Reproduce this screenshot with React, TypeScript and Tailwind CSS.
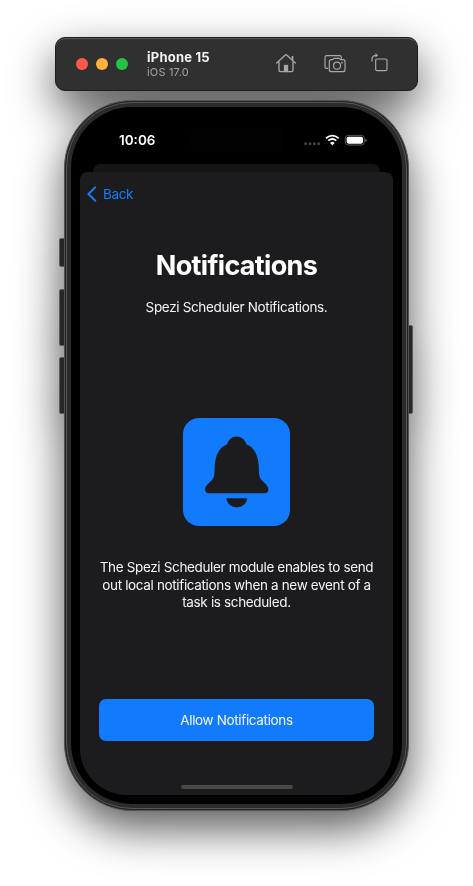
import React from "react";

function HomeIcon() {
  return (
    <svg className="h-5 w-5" viewBox="0 0 60 60" fill="none" stroke="#a8a8a8" strokeWidth="4" strokeLinecap="round" strokeLinejoin="round">
      <path d="M2 30 L27 6.500 Q30 4 33 6.500 L58 30" />
      <path d="M9 27 V52 Q9 56 13 56 H47 Q51 56 51 52 V27" />
      <path d="M49.500 21 V9" strokeLinecap="butt" strokeWidth="5" />
      <path d="M24 55 V36 H36 V55 Z" fill="#a8a8a8" strokeWidth="1" />
    </svg>
  );
}

function ScreenshotIcon() {
  return (
    <svg className="h-5 w-[22px]" viewBox="0 0 66 60" fill="none" stroke="#a8a8a8" strokeWidth="3.500" strokeLinecap="round" strokeLinejoin="round">
      <path d="M11 46 H8 Q3 46 3 41 V13 Q3 8 8 8 H47 Q52 8 52 13 V16" />
      <path d="M22 20 H26 L30 16 H46 L50 20 H57 Q63 20 63 26 V50 Q63 56 57 56 H22 Q16 56 16 50 V26 Q16 20 22 20 Z" />
      <circle cx="39" cy="38" r="10.500" />
      <circle cx="54" cy="29" r="1" />
    </svg>
  );
}

function RotateIcon() {
  return (
    <svg className="h-5 w-[18px]" viewBox="0 0 54 60" fill="none" stroke="#a8a8a8" strokeWidth="3.500" strokeLinecap="round" strokeLinejoin="round">
      <rect x="14" y="18" width="34" height="35" rx="4" />
      <path d="M3 24 V19 Q3 7 16 7" />
      <path d="M14 1.500 L21 7 L14 12.500 Z" fill="#a8a8a8" strokeWidth="1" />
    </svg>
  );
}

function BellIcon() {
  return (
    <svg className="h-full w-full" viewBox="39 40 321 321" fill="#1c1c1e">
      <path d="M199 95 C213 95 224 104 229 119 C252 128 263 151 265 181 C266 200 265 213 271 222 C279 233 294 240 294 254 C294 262 288 265 280 265 H119 C111 265 105 262 105 254 C105 240 120 233 128 222 C134 213 133 200 134 181 C136 151 147 128 170 119 C175 104 185 95 199 95 Z" />
      <path d="M168.500 280 H231 C229 296 216 307 199.500 307 C183 307 170.500 296 168.500 280 Z" />
    </svg>
  );
}

function StatusIcons() {
  return (
    <svg className="h-[14px] w-[66px]" viewBox="0 0 198 42" fill="none">
      <g fill="#424242">
        <rect x="4" y="28" width="8" height="8" rx="2.500" />
        <rect x="17" y="28" width="8" height="8" rx="2.500" />
        <rect x="30" y="28" width="8" height="8" rx="2.500" />
        <rect x="43" y="28" width="8" height="8" rx="2.500" />
      </g>
      <g stroke="#fff" strokeWidth="5.500">
        <path d="M69 15.500 Q88 0.500 107 15.500" />
        <path d="M76 23 Q88 13 100 23" />
      </g>
      <path d="M81 30 Q88 23 95 30 L88 37 Z" fill="#fff" />
      <rect x="127" y="7" width="57" height="29" rx="9" stroke="#6c6c6c" strokeWidth="2.500" />
      <rect x="131" y="11" width="49" height="21" rx="5.500" fill="#fff" />
      <path d="M187 17 Q191 18 191 21.500 Q191 25 187 26 Z" fill="#6c6c6c" />
    </svg>
  );
}

function Toolbar() {
  return (
    <header className="flex h-[54px] w-[363px] items-center rounded-[10px] border border-[#1d1d1d] bg-[#303030] shadow-[inset_0_1px_0_#585858]">
      <div className="ml-5 flex gap-2">
        <span className="h-3 w-3 rounded-full bg-[#ff5650]" />
        <span className="h-3 w-3 rounded-full bg-[#fdb33b]" />
        <span className="h-3 w-3 rounded-full bg-[#27c145]" />
      </div>
      <div className="ml-[19px] flex w-[129px] flex-col">
        <span className="text-[13px] leading-[15px] font-bold tracking-[0.22px] text-[#f2f2f2]">iPhone 15</span>
        <span className="text-[11px] leading-[14px] tracking-[0.18px] text-[#a3a3a3]">iOS 17.0</span>
      </div>
      <div className="flex items-center">
        <span className="-mt-[2px] flex"><HomeIcon /></span>
        <span className="-mt-[2px] ml-[28px] flex"><ScreenshotIcon /></span>
        <span className="-mt-[2px] ml-[25px] flex"><RotateIcon /></span>
      </div>
    </header>
  );
}

function SideButtons() {
  return (
    <>
      <span className="absolute top-[138px] -left-[5px] h-[29px] w-[7px] rounded-[2px] border border-[#5c5c5c] bg-[#262727]" />
      <span className="absolute top-[189px] -left-[5px] h-[57px] w-[7px] rounded-[2px] border border-[#5c5c5c] bg-[#262727]" />
      <span className="absolute top-[257px] -left-[5px] h-[57px] w-[7px] rounded-[2px] border border-[#5c5c5c] bg-[#262727]" />
      <span className="absolute top-[225px] -right-[4px] h-[89px] w-[6px] rounded-[2px] border border-[#5c5c5c] bg-[#262727]" />
    </>
  );
}

function Sheet() {
  return (
    <main className="flex h-[623px] flex-col items-center rounded-t-[8px] rounded-b-[47px] bg-[#1c1c1e]">
      <div className="flex h-11 w-full items-center pl-[7px] text-[#157cfb]">
        <svg className="h-4 w-[10px]" viewBox="0 0 10 16" fill="none" stroke="currentColor" strokeWidth="1.900" strokeLinecap="round" strokeLinejoin="round">
          <path d="M8.300 1.300 L1.400 8 L8.300 14.700" />
        </svg>
        <span className="ml-[6px] text-[13.5px] tracking-[-0.35px]">Back</span>
      </div>
      <h1 className="mt-[33px] text-[27px] leading-[34px] font-bold tracking-[-0.68px]">Notifications</h1>
      <p className="mt-[15px] text-[13.5px] leading-[18px] tracking-[-0.34px] text-[#f4f4f4]">Spezi Scheduler Notifications.</p>
      <div className="mt-[102px] h-[107.500px] w-[107.500px] shrink-0 overflow-hidden rounded-[16px] bg-[#117afd]">
        <BellIcon />
      </div>
      <p className="mt-[33.500px] text-center text-[13.5px] leading-[17.500px] tracking-[-0.35px] text-[#f4f4f4]">
        The Spezi Scheduler module enables to send
        <br />
        out local notifications when a new event of a
        <br />
        task is scheduled.
      </p>
      <button className="mt-[87.500px] h-[41.500px] w-[275px] shrink-0 rounded-[7px] bg-[#117afd] text-[13.5px] tracking-[-0.35px] text-[#f4f8ff]">
        Allow Notifications
      </button>
      <div className="mt-auto mb-[6px] h-[4px] w-[112px] rounded-full bg-[#49494a]" />
    </main>
  );
}

function Phone() {
  return (
    <section className="relative mt-[9px] h-[711px] w-[345px]">
      <SideButtons />
      <div className="relative h-full rounded-[68px] border border-[#555555] bg-[#222222] p-px">
        <div className="h-full rounded-[66px] border border-[#565656] bg-[#2b2b2b] p-1">
          <div className="h-full rounded-[61px] bg-black px-[9px] pt-[9px]">
            <div className="flex h-12 items-center pl-[39px]">
              <span className="w-[69px] text-[13.5px] font-semibold">10:06</span>
              <span className="h-[26px] w-[97px] rounded-full bg-[#020202]" />
              <span className="ml-[18px] flex"><StatusIcons /></span>
            </div>
            <div className="mx-[13px] h-2 rounded-t-[7px] bg-[#151516]" />
            <Sheet />
          </div>
        </div>
      </div>
    </section>
  );
}

export default function App() {
  return (
    <div className="flex h-[886px] w-[473px] flex-col overflow-hidden bg-white pt-[37px] font-['Inter','Liberation_Sans',sans-serif] text-white">
      <div className="flex flex-col items-center [filter:drop-shadow(0_18px_22px_rgba(0,0,0,0.65))]">
        <Toolbar />
        <Phone />
      </div>
    </div>
  );
}
